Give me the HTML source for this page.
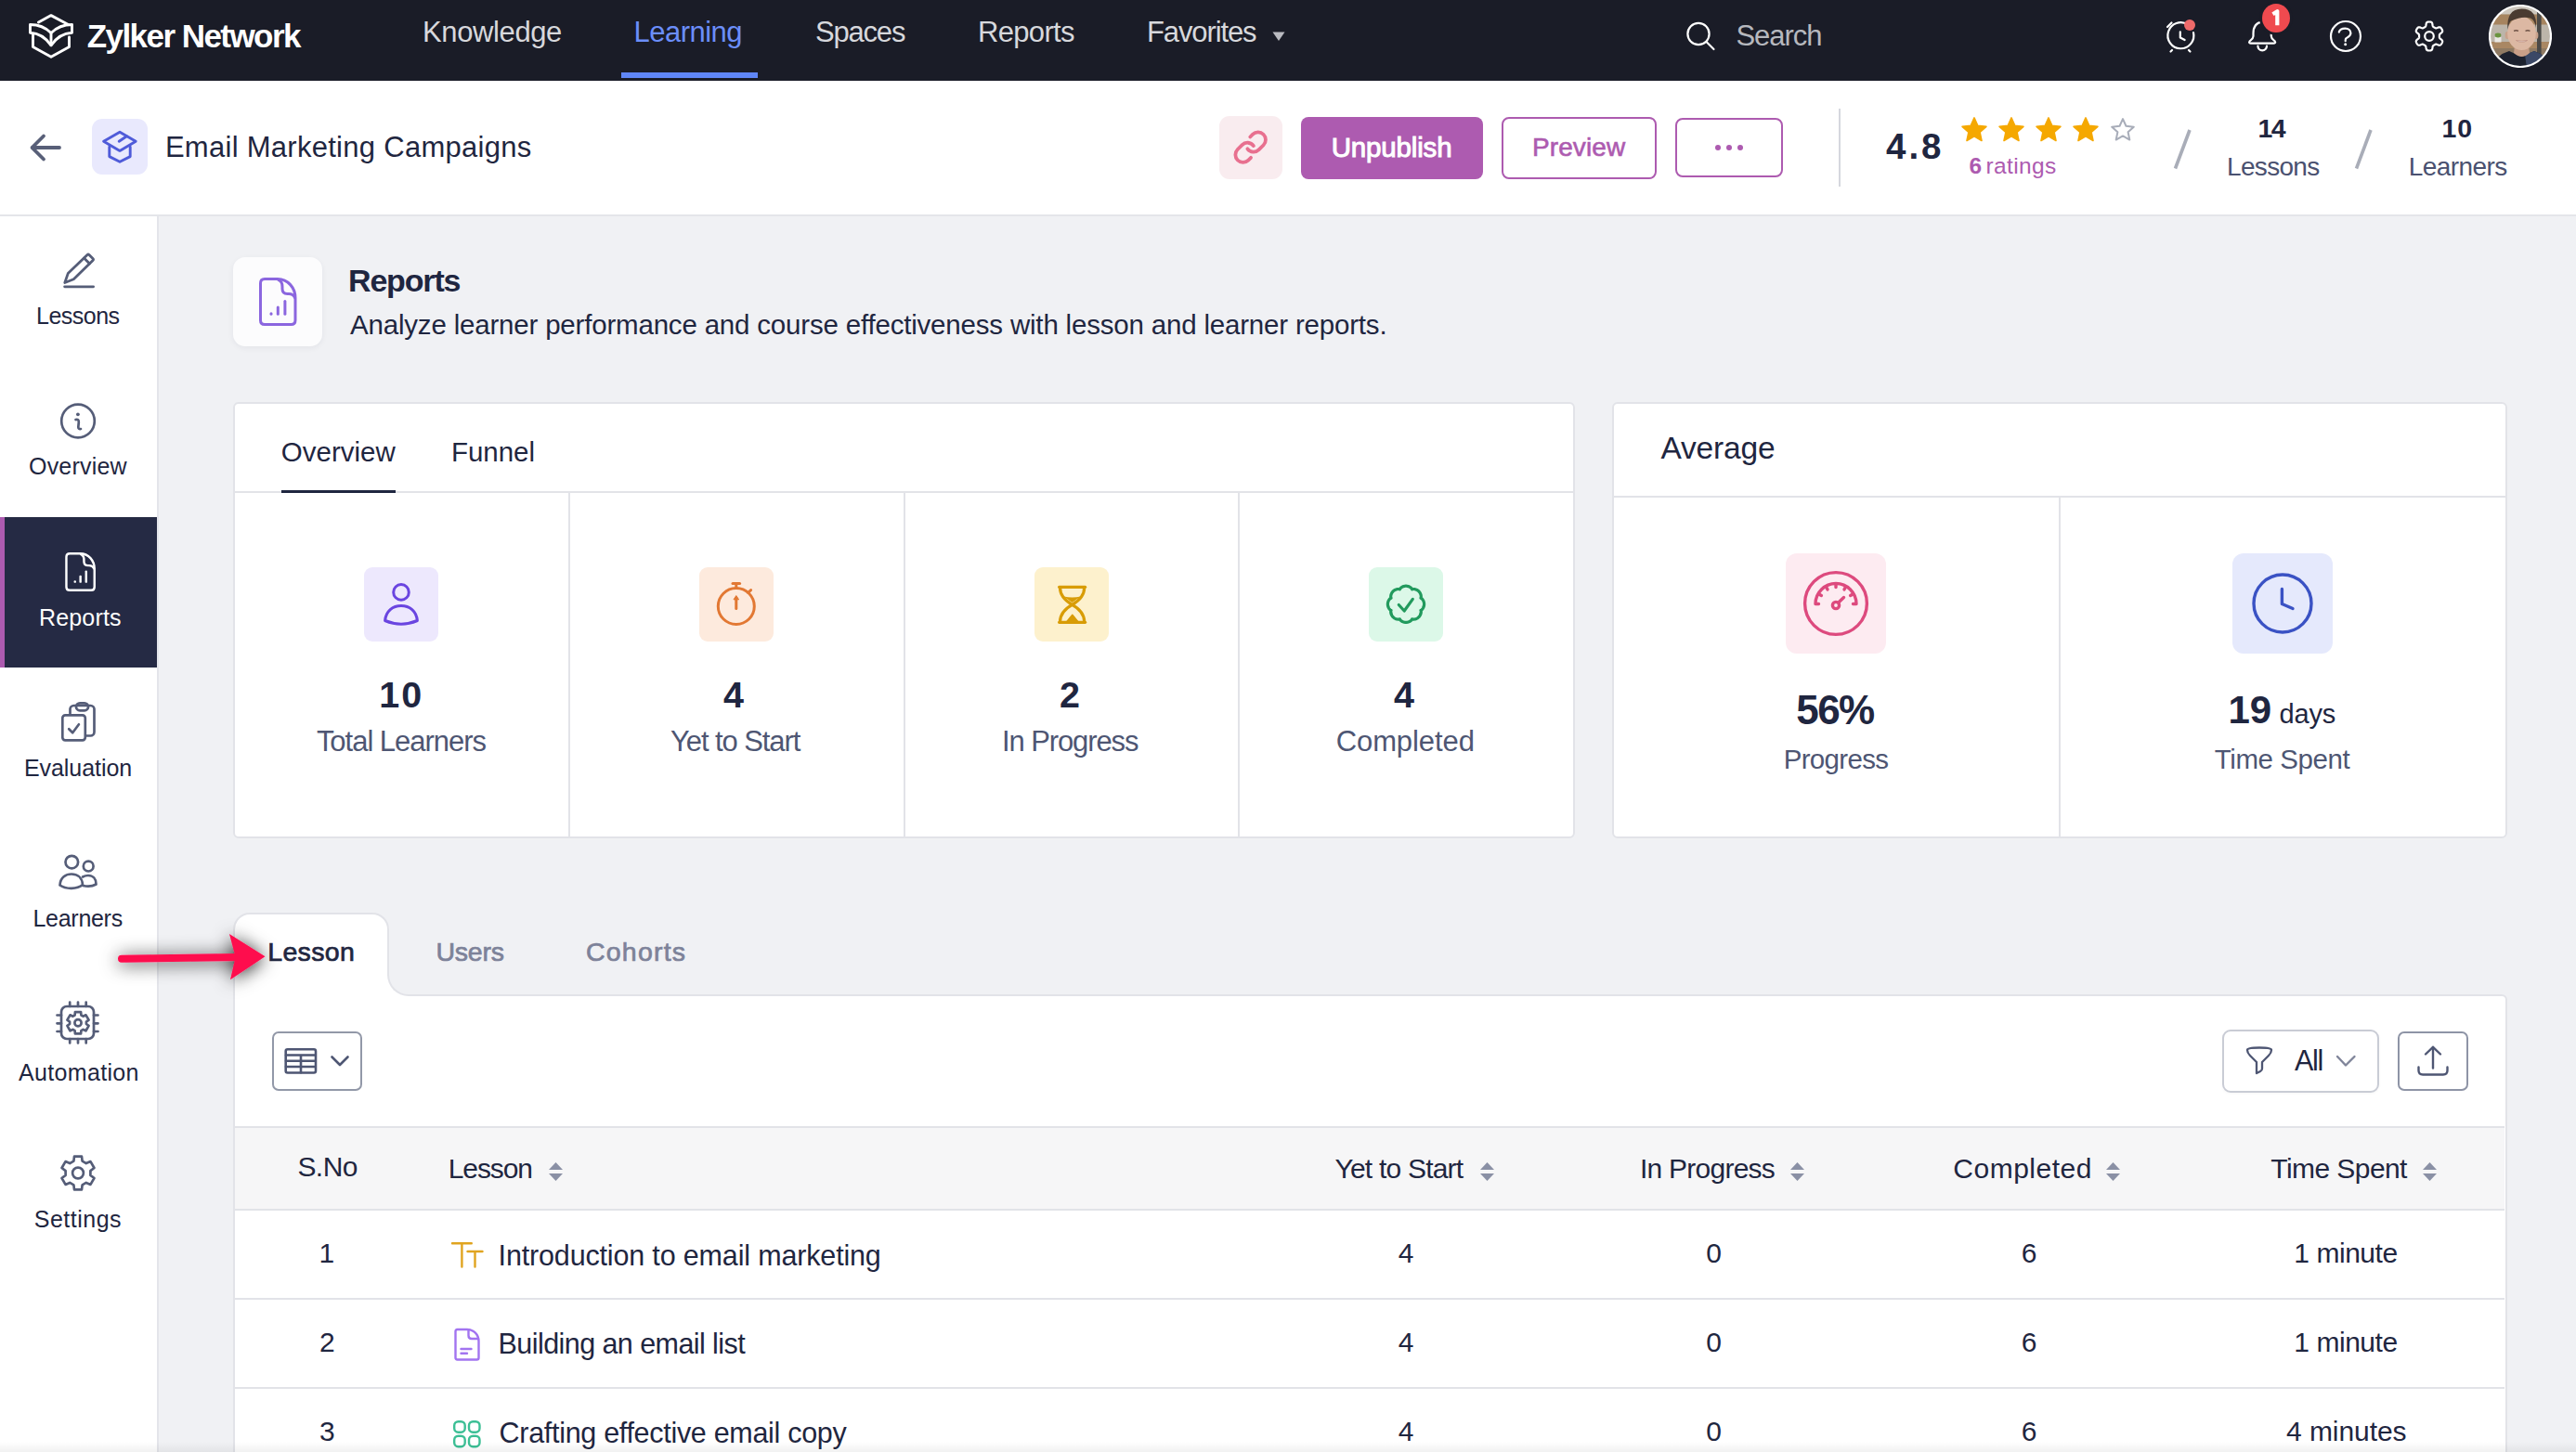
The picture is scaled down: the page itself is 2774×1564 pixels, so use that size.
<!DOCTYPE html><html><head><meta charset="utf-8"><style>
html,body{margin:0;padding:0;}
body{width:2774px;height:1564px;position:relative;overflow:hidden;background:#f0f1f4;font-family:"Liberation Sans",sans-serif;}
.t{position:absolute;white-space:nowrap;}
svg{display:block;}
</style></head><body>
<div style="position:absolute;left:0px;top:0px;width:2774px;height:87px;background:#1a1c27"></div>
<div style="position:absolute;left:669px;top:78px;width:147px;height:6px;background:#5f86f7"></div>
<svg style="position:absolute;left:31px;top:15px;" width="48" height="48" viewBox="0 0 48 48" fill="none"><g stroke="#fff" stroke-width="2.9" stroke-linejoin="round" stroke-linecap="round">
<path d="M10.5 9 L24 1.6 L42.5 11.5"/>
<path d="M1.5 11.5 Q15 11.5 24 20.5 Q33 11.5 46.5 11.5 V20.3 Q33 21 24 33.8 Q15 21 1.5 20.3 Z"/>
<path d="M24 20.5 V33.8"/>
<path d="M4.5 21.5 V35.5 L24 46.2 L43.5 35.5 V25"/>
</g></svg>
<div class="t" style="left:93.7px;top:20.8px;font-size:35.0px;line-height:35.0px;font-weight:700;letter-spacing:-1.55px;color:#ffffff;">Zylker Network</div>
<div class="t" style="left:455px;top:18.9px;font-size:31.0px;line-height:31.0px;font-weight:400;letter-spacing:-0.38px;color:#d7d8dc;">Knowledge</div>
<div class="t" style="left:878px;top:18.9px;font-size:31.0px;line-height:31.0px;font-weight:400;letter-spacing:-1.2px;color:#d7d8dc;">Spaces</div>
<div class="t" style="left:1053px;top:18.9px;font-size:31.0px;line-height:31.0px;font-weight:400;letter-spacing:-0.67px;color:#d7d8dc;">Reports</div>
<div class="t" style="left:1235px;top:18.9px;font-size:31.0px;line-height:31.0px;font-weight:400;letter-spacing:-1.12px;color:#d7d8dc;">Favorites</div>
<div class="t" style="left:682.4px;top:18.9px;font-size:31.0px;line-height:31.0px;font-weight:400;letter-spacing:-0.49px;color:#6b8efa;">Learning</div>
<svg style="position:absolute;left:1368px;top:32px;" width="18" height="14" viewBox="0 0 18 14" fill="none"><path d="M2.5 2.5 H15.5 L9 12 Z" fill="#b9bac0"/></svg>
<svg style="position:absolute;left:1810px;top:18px;" width="40" height="40" viewBox="0 0 40 40" fill="none"><g stroke="#fff" stroke-width="2.2" stroke-linecap="round"><circle cx="19" cy="18.5" r="11.6"/><path d="M27.5 27 L35.5 35"/></g></svg>
<div class="t" style="left:1869.4px;top:23.1px;font-size:31.0px;line-height:31.0px;font-weight:400;letter-spacing:-1.04px;color:#b6b8be;">Search</div>
<svg style="position:absolute;left:2326px;top:16px;" width="44" height="44" viewBox="0 0 44 44" fill="none"><g stroke="#fff" stroke-width="2.2" stroke-linecap="round" stroke-linejoin="round">
<path d="M30 10.5 A14 14 0 1 0 36 19"/>
<path d="M21.8 18.3 V24.6 L26.6 27"/>
<path d="M8 13 L12.5 8.5"/>
<path d="M13 38 L11.5 39.5"/><path d="M31 38 L32.5 39.5"/>
</g><circle cx="32" cy="11" r="6" fill="#ef6a6a"/></svg>
<svg style="position:absolute;left:2414px;top:17px;" width="44" height="44" viewBox="0 0 44 44" fill="none"><g stroke="#fff" stroke-width="2.2" stroke-linecap="round" stroke-linejoin="round" fill="none"><path d="M22 6.6 C15 7.5 12.5 13 12.5 19 L12.5 22 C12.5 24.5 10 26 8.5 27.5 C7.5 29 8.5 29.6 10 29.6 H34.3 C35.8 29.6 36.8 29 35.8 27.5 C34.3 26 31.8 24.5 31.8 22 L31.8 19 C31.8 13 29.5 7.5 22 6.6 Z"/><path d="M17.4 32.6 A4.8 4.8 0 0 0 27 32.6"/></g></svg>
<div style="position:absolute;left:2435.5px;top:3.5px;width:30px;height:31px;background:#ef4a4f;border-radius:50%;box-shadow:0 0 0 3px #1a1c27"></div>
<svg style="position:absolute;left:2435.5px;top:3.5px;" width="30" height="31" viewBox="0 0 30 31" fill="none"><path d="M11.5 11.3 L16.3 8.2 V23.3" stroke="#fff" stroke-width="4.2" stroke-linecap="butt" stroke-linejoin="round" fill="none"/></svg>
<svg style="position:absolute;left:2506px;top:19px;" width="40" height="40" viewBox="0 0 40 40" fill="none"><g stroke="#fff" stroke-width="2.2" stroke-linecap="round" fill="none">
<circle cx="20" cy="20" r="16"/>
<path d="M12.8 15.6 C13.5 12.8 16.5 11.6 19.5 11.6 C23 11.6 25.4 13.8 25.4 16.8 C25.4 19.8 22.5 21 20.8 22 C19.9 22.5 19.7 23.3 19.7 24.5 V25.2"/>
</g><circle cx="19.7" cy="28.7" r="1.5" fill="#fff"/></svg>
<svg style="position:absolute;left:2596px;top:19px;" width="40" height="40" viewBox="0 0 40 40" fill="none"><g stroke="#fff" stroke-width="2.2" stroke-linejoin="round"><path d="M30.90 20.00 L30.90 20.29 L30.90 20.57 L30.90 20.86 L30.91 21.15 L30.95 21.44 L31.04 21.75 L31.22 22.08 L31.55 22.45 L32.08 22.90 L32.75 23.42 L33.40 23.97 L33.88 24.51 L34.13 25.01 L34.22 25.46 L34.19 25.88 L34.09 26.27 L33.96 26.66 L33.80 27.03 L33.62 27.39 L33.42 27.75 L33.21 28.10 L32.99 28.43 L32.75 28.76 L32.48 29.07 L32.18 29.35 L31.83 29.58 L31.40 29.74 L30.85 29.77 L30.14 29.62 L29.33 29.33 L28.55 29.01 L27.90 28.77 L27.41 28.67 L27.03 28.68 L26.72 28.76 L26.45 28.88 L26.19 29.01 L25.94 29.15 L25.70 29.30 L25.45 29.44 L25.20 29.58 L24.95 29.72 L24.71 29.87 L24.46 30.02 L24.23 30.20 L24.00 30.43 L23.81 30.75 L23.65 31.23 L23.53 31.91 L23.42 32.75 L23.26 33.59 L23.03 34.28 L22.73 34.74 L22.38 35.04 L22.00 35.22 L21.61 35.34 L21.21 35.42 L20.81 35.47 L20.41 35.49 L20.00 35.50 L19.59 35.49 L19.19 35.47 L18.79 35.42 L18.39 35.34 L18.00 35.22 L17.62 35.04 L17.27 34.74 L16.97 34.28 L16.74 33.59 L16.58 32.75 L16.47 31.91 L16.35 31.23 L16.19 30.75 L16.00 30.43 L15.77 30.20 L15.54 30.02 L15.29 29.87 L15.05 29.72 L14.80 29.58 L14.55 29.44 L14.30 29.30 L14.06 29.15 L13.81 29.01 L13.55 28.88 L13.28 28.76 L12.97 28.68 L12.59 28.67 L12.10 28.77 L11.45 29.01 L10.67 29.33 L9.86 29.62 L9.15 29.77 L8.60 29.74 L8.17 29.58 L7.82 29.35 L7.52 29.07 L7.25 28.76 L7.01 28.43 L6.79 28.10 L6.58 27.75 L6.38 27.39 L6.20 27.03 L6.04 26.66 L5.91 26.27 L5.81 25.88 L5.78 25.46 L5.87 25.01 L6.12 24.51 L6.60 23.97 L7.25 23.42 L7.92 22.90 L8.45 22.45 L8.78 22.08 L8.96 21.75 L9.05 21.44 L9.09 21.15 L9.10 20.86 L9.10 20.57 L9.10 20.29 L9.10 20.00 L9.10 19.71 L9.10 19.43 L9.10 19.14 L9.09 18.85 L9.05 18.56 L8.96 18.25 L8.78 17.92 L8.45 17.55 L7.92 17.10 L7.25 16.58 L6.60 16.03 L6.12 15.49 L5.87 14.99 L5.78 14.54 L5.81 14.12 L5.91 13.73 L6.04 13.34 L6.20 12.97 L6.38 12.61 L6.58 12.25 L6.79 11.90 L7.01 11.57 L7.25 11.24 L7.52 10.93 L7.82 10.65 L8.17 10.42 L8.60 10.26 L9.15 10.23 L9.86 10.38 L10.67 10.67 L11.45 10.99 L12.10 11.23 L12.59 11.33 L12.97 11.32 L13.28 11.24 L13.55 11.12 L13.81 10.99 L14.06 10.85 L14.30 10.70 L14.55 10.56 L14.80 10.42 L15.05 10.28 L15.29 10.13 L15.54 9.98 L15.77 9.80 L16.00 9.57 L16.19 9.25 L16.35 8.77 L16.47 8.09 L16.58 7.25 L16.74 6.41 L16.97 5.72 L17.27 5.26 L17.62 4.96 L18.00 4.78 L18.39 4.66 L18.79 4.58 L19.19 4.53 L19.59 4.51 L20.00 4.50 L20.41 4.51 L20.81 4.53 L21.21 4.58 L21.61 4.66 L22.00 4.78 L22.38 4.96 L22.73 5.26 L23.03 5.72 L23.26 6.41 L23.42 7.25 L23.53 8.09 L23.65 8.77 L23.81 9.25 L24.00 9.57 L24.23 9.80 L24.46 9.98 L24.71 10.13 L24.95 10.28 L25.20 10.42 L25.45 10.56 L25.70 10.70 L25.94 10.85 L26.19 10.99 L26.45 11.12 L26.72 11.24 L27.03 11.32 L27.41 11.33 L27.90 11.23 L28.55 10.99 L29.33 10.67 L30.14 10.38 L30.85 10.23 L31.40 10.26 L31.83 10.42 L32.18 10.65 L32.48 10.93 L32.75 11.24 L32.99 11.57 L33.21 11.90 L33.42 12.25 L33.62 12.61 L33.80 12.97 L33.96 13.34 L34.09 13.73 L34.19 14.12 L34.22 14.54 L34.13 14.99 L33.88 15.49 L33.40 16.03 L32.75 16.58 L32.08 17.10 L31.55 17.55 L31.22 17.92 L31.04 18.25 L30.95 18.56 L30.91 18.85 L30.90 19.14 L30.90 19.43 L30.90 19.71 Z"/><circle cx="20" cy="20" r="4.8"/></g></svg>
<svg style="position:absolute;left:2680px;top:5px;" width="68" height="68" viewBox="0 0 68 68" fill="none"><defs><clipPath id="avc"><circle cx="34" cy="34" r="33"/></clipPath></defs>
<g clip-path="url(#avc)">
<rect width="68" height="68" fill="#bcb5aa"/>
<rect y="0" width="68" height="10.5" fill="#cdc7be"/>
<rect y="10.5" width="68" height="11" fill="#a6845f"/>
<rect y="40" width="68" height="7" fill="#a98763"/>
<rect y="47" width="68" height="21" fill="#8f7a63"/>
<rect x="52" y="8" width="4.6" height="60" fill="#4a4947"/>
<rect x="6.5" y="35" width="7" height="5.5" fill="#e9e7e3"/>
<ellipse cx="10" cy="33" rx="3.4" ry="2.4" fill="#6a9440"/>
<path d="M3 68 Q8 54 22 50 L35.5 56 L49 50 Q62 54 66 68 Z" fill="#1c212e"/>
<path d="M39 54 L49 50 Q62 54 66 68 H41 Z" fill="#3b4866"/>
<path d="M28 44 L27 52 Q35.5 60 44 52 L43 44 Z" fill="#c99f88"/>
<ellipse cx="19.8" cy="33" rx="2.2" ry="4" fill="#c9a28c"/>
<ellipse cx="51.2" cy="33" rx="2.2" ry="4" fill="#c9a28c"/>
<ellipse cx="35.5" cy="31" rx="15.3" ry="18" fill="#dcb8a3"/>
<path d="M20.5 27 Q18.5 5 35.5 4.6 Q52.5 4.6 51 25 Q50 17 45 14.5 Q36 12 24 17.5 Q21.5 20 20.5 27 Z" fill="#4a3b31"/>
<path d="M27 28.3 Q29.5 27.2 32 28.3 M39.5 28.3 Q42 27.2 44.5 28.3" stroke="#6e5246" stroke-width="1.3" fill="none"/>
<path d="M29.5 38.5 Q35.5 42 41.5 38.5 Q35.5 40 29.5 38.5 Z" fill="#f4efe8" stroke="#b8857a" stroke-width="0.6"/>
</g>
<circle cx="34" cy="34" r="33" stroke="#fff" stroke-width="2.2" fill="none"/></svg>
<div style="position:absolute;left:0px;top:87px;width:2774px;height:144px;background:#fff"></div>
<div style="position:absolute;left:0px;top:231px;width:2774px;height:2px;background:#e4e5ea"></div>
<svg style="position:absolute;left:28px;top:140px;" width="42" height="38" viewBox="0 0 42 38" fill="none"><g stroke="#585f78" stroke-width="3.8" stroke-linecap="round" stroke-linejoin="round" fill="none"><path d="M36 19 H7"/><path d="M19 6.5 L6.5 19 L19 31.5"/></g></svg>
<div style="position:absolute;left:99px;top:128px;width:60px;height:60px;background:#e9e9fd;border-radius:11px"></div>
<svg style="position:absolute;left:99px;top:128px;" width="60" height="60" viewBox="0 0 60 60" fill="none"><g stroke="#4f5bd9" stroke-width="2.9" stroke-linejoin="round" stroke-linecap="round" fill="none">
<path d="M12.6 24.3 L30 14.3 L47.2 24.3 L30 34.4 Z"/>
<path d="M18.8 30.2 V40.6 L30 46.3 L41.2 40.6 V30.2"/>
<path d="M29.2 24.3 L37.4 18.8"/>
</g></svg>
<div class="t" style="left:177.9px;top:143.3px;font-size:31.0px;line-height:31.0px;font-weight:400;letter-spacing:0.28px;color:#1f2640;">Email Marketing Campaigns</div>
<div style="position:absolute;left:1313px;top:125px;width:68px;height:68px;background:#f9ecef;border-radius:11px"></div>
<svg style="position:absolute;left:1327.4px;top:139.4px;" width="39.3" height="39.3" viewBox="0 0 24 24" fill="none"><g stroke="#e8708f" stroke-width="2.3" stroke-linecap="round" stroke-linejoin="round" fill="none"><path d="M10 13a5 5 0 0 0 7.54.54l3-3a5 5 0 0 0-7.07-7.07l-1.72 1.71"/><path d="M14 11a5 5 0 0 0-7.54-.54l-3 3a5 5 0 0 0 7.07 7.07l1.71-1.71"/></g></svg>
<div style="position:absolute;left:1401px;top:126px;width:196px;height:67px;background:#ad5bb0;border-radius:8px"></div>
<div class="t" style="left:1433.7px;top:144.1px;font-size:29.5px;line-height:29.5px;font-weight:400;letter-spacing:-0.16px;color:#ffffff;-webkit-text-stroke:1px #fff">Unpublish</div>
<div style="position:absolute;left:1617px;top:126px;width:167px;height:67px;border:2px solid #ad5bb0;border-radius:8px;box-sizing:border-box"></div>
<div class="t" style="left:1650px;top:145.2px;font-size:28.0px;line-height:28.0px;font-weight:400;letter-spacing:0.1px;color:#ad5bb0;-webkit-text-stroke:0.6px #ad5bb0">Preview</div>
<div style="position:absolute;left:1804px;top:127px;width:116px;height:64px;border:2px solid #ad5bb0;border-radius:8px;box-sizing:border-box"></div>
<div style="position:absolute;left:1846.8px;top:155.8px;width:6.4px;height:6.4px;background:#ad5bb0;border-radius:50%"></div>
<div style="position:absolute;left:1858.8px;top:155.8px;width:6.4px;height:6.4px;background:#ad5bb0;border-radius:50%"></div>
<div style="position:absolute;left:1870.8px;top:155.8px;width:6.4px;height:6.4px;background:#ad5bb0;border-radius:50%"></div>
<div style="position:absolute;left:1980px;top:117px;width:2px;height:84px;background:#d5d7de"></div>
<div class="t" style="left:2031px;top:139.3px;font-size:38.5px;line-height:38.5px;font-weight:700;letter-spacing:3.0px;color:#1f2640;">4.8</div>
<svg style="position:absolute;left:2100px;top:120px;" width="200" height="40" viewBox="0 0 200 40" fill="none"><path d="M26.00 6.90 L29.76 15.32 L38.93 16.30 L32.09 22.48 L33.99 31.50 L26.00 26.90 L18.01 31.50 L19.91 22.48 L13.07 16.30 L22.24 15.32 Z" fill="#f5a800" stroke="#f5a800" stroke-width="1.6" stroke-linejoin="round"/><path d="M66.00 6.90 L69.76 15.32 L78.93 16.30 L72.09 22.48 L73.99 31.50 L66.00 26.90 L58.01 31.50 L59.91 22.48 L53.07 16.30 L62.24 15.32 Z" fill="#f5a800" stroke="#f5a800" stroke-width="1.6" stroke-linejoin="round"/><path d="M106.00 6.90 L109.76 15.32 L118.93 16.30 L112.09 22.48 L113.99 31.50 L106.00 26.90 L98.01 31.50 L99.91 22.48 L93.07 16.30 L102.24 15.32 Z" fill="#f5a800" stroke="#f5a800" stroke-width="1.6" stroke-linejoin="round"/><path d="M146.00 6.90 L149.76 15.32 L158.93 16.30 L152.09 22.48 L153.99 31.50 L146.00 26.90 L138.01 31.50 L139.91 22.48 L133.07 16.30 L142.24 15.32 Z" fill="#f5a800" stroke="#f5a800" stroke-width="1.6" stroke-linejoin="round"/><path d="M186.00 8.10 L189.47 15.73 L197.79 16.67 L191.61 22.32 L193.29 30.53 L186.00 26.40 L178.71 30.53 L180.39 22.32 L174.21 16.67 L182.53 15.73 Z" fill="none" stroke="#a8adb9" stroke-width="2" stroke-linejoin="round"/></svg>
<div class="t" style="left:2120.5px;top:166.8px;font-size:24.5px;line-height:24.5px;font-weight:700;letter-spacing:0px;color:#ad5bb0;">6</div>
<div class="t" style="left:2138.5px;top:166.8px;font-size:24.5px;line-height:24.5px;font-weight:400;letter-spacing:0.35px;color:#ad5bb0;">ratings</div>
<svg style="position:absolute;left:2330px;top:130px;" width="40" height="60" viewBox="0 0 40 60" fill="none"><path d="M28 10 L12.5 51.5" stroke="#a9adb8" stroke-width="3.6"/></svg>
<svg style="position:absolute;left:2525px;top:130px;" width="40" height="60" viewBox="0 0 40 60" fill="none"><path d="M28 10 L12.5 51.5" stroke="#a9adb8" stroke-width="3.6"/></svg>
<div class="t" style="left:2431.5px;top:124.0px;font-size:28.5px;line-height:28.5px;font-weight:700;letter-spacing:-1.5px;color:#1f2640;">14</div>
<div class="t" style="left:2398px;top:166.0px;font-size:28.0px;line-height:28.0px;font-weight:400;letter-spacing:-0.67px;color:#4a5170;">Lessons</div>
<div class="t" style="left:2629.6px;top:124.0px;font-size:28.5px;line-height:28.5px;font-weight:700;letter-spacing:0.8px;color:#1f2640;">10</div>
<div class="t" style="left:2593.7px;top:166.0px;font-size:28.0px;line-height:28.0px;font-weight:400;letter-spacing:-0.57px;color:#4a5170;">Learners</div>
<div style="position:absolute;left:0px;top:233px;width:169px;height:1331px;background:#fff"></div>
<div style="position:absolute;left:169px;top:233px;width:2px;height:1331px;background:#e4e5ea"></div>
<div style="position:absolute;left:0px;top:557px;width:169px;height:162px;background:#252a44"></div>
<div style="position:absolute;left:0px;top:557px;width:5px;height:162px;background:#ad5bb0"></div>
<svg style="position:absolute;left:60px;top:265px;" width="50" height="52" viewBox="0 0 50 52" fill="none"><g stroke="#555d78" stroke-width="2.8" stroke-linecap="round" stroke-linejoin="round" fill="none">
<path d="M9.8 39.5 L13.2 29.6 L34 9.5 Q35 8.5 36 9.5 L40 13.5 Q41 14.5 40 15.5 L19.3 35.8 Z"/>
<path d="M30.5 13 L36.5 19"/>
<path d="M9.6 43.8 H40.6"/>
</g></svg>
<svg style="position:absolute;left:60px;top:430px;" width="48" height="48" viewBox="0 0 48 48" fill="none"><g stroke="#555d78" stroke-width="2.7" stroke-linecap="round" fill="none"><circle cx="24" cy="23.5" r="17.8"/>
<path d="M21.5 22 Q25 21 24.8 25 L24.3 30 Q24.4 32.5 27 32"/></g><circle cx="23.9" cy="16.3" r="1.9" fill="#555d78"/></svg>
<svg style="position:absolute;left:70px;top:594.8px;" width="33.6" height="42" viewBox="0 0 41 52" fill="none"><g stroke="#ffffff" stroke-width="3" stroke-linecap="round" stroke-linejoin="round" fill="none">
<path d="M1.5 6 Q1.5 1.5 6 1.5 H20 C31 1.5 39 11 39 22 V46 Q39 50.5 34.5 50.5 H6 Q1.5 50.5 1.5 46 Z"/>
<path d="M21 2.5 Q25 4 25 10 V12 Q25 17.5 30.5 17.5 H32 Q36.5 17.5 38.5 21.5"/>
<path d="M13 38.8 V39.2"/><path d="M20.3 32 V39.2"/><path d="M27.9 25.5 V39.2"/>
</g></svg>
<svg style="position:absolute;left:60px;top:750px;" width="50" height="54" viewBox="0 0 50 54" fill="none"><g stroke="#555d78" stroke-width="2.7" stroke-linecap="round" stroke-linejoin="round" fill="none">
<path d="M15.5 18.5 V14 a4 4 0 0 1 4 -4 H37.5 a4 4 0 0 1 4 4 V38.5 a4 4 0 0 1 -4 4 H32.8"/>
<rect x="22" y="7.3" width="13" height="8" rx="4"/>
<rect x="7.3" y="20.3" width="24.5" height="27" rx="3"/>
<path d="M14.2 35.2 L18.2 39.2 L24.9 30.3"/>
</g></svg>
<svg style="position:absolute;left:60px;top:912px;" width="50" height="52" viewBox="0 0 50 52" fill="none"><g stroke="#555d78" stroke-width="2.7" stroke-linecap="round" stroke-linejoin="round" fill="none">
<circle cx="17.3" cy="16.6" r="6.8"/><circle cx="35.2" cy="21.1" r="5.4"/>
<path d="M4.5 41.5 C5 33 11 29.5 17 29.5 C23 29.5 28.5 33 29 41 C23 46 11 46 4.5 41.5 Z"/>
<path d="M29 32.5 C31 31.5 33 31 35 31 C40 31 43.5 34.5 43.5 40.5 C40 42.5 34 43 29.5 42"/>
</g></svg>
<svg style="position:absolute;left:59px;top:1077px;" width="50" height="50" viewBox="0 0 50 50" fill="none"><g stroke="#555d78" stroke-width="2.7" stroke-linecap="round" stroke-linejoin="round" fill="none">
<rect x="7" y="7" width="35" height="35" rx="6"/>
<path d="M16.2 2.5 V7 M25 2.5 V7 M33.7 2.5 V7 M16.2 42 V46.5 M25 42 V46.5 M33.7 42 V46.5 M2.5 16.5 H7 M2.5 25.3 H7 M2.5 34 H7 M42 16.5 H46.5 M42 25.3 H46.5 M42 34 H46.5"/>
<path d="M21.60 16.47 L21.89 13.21 L28.11 13.21 L28.40 16.47 L30.52 17.69 L33.49 16.31 L36.59 21.69 L33.92 23.58 L33.92 26.02 L36.59 27.91 L33.49 33.29 L30.52 31.91 L28.40 33.13 L28.11 36.39 L21.89 36.39 L21.60 33.13 L19.48 31.91 L16.51 33.29 L13.41 27.91 L16.08 26.02 L16.08 23.58 L13.41 21.69 L16.51 16.31 L19.48 17.69 Z"/><circle cx="25" cy="24.8" r="3.6"/>
</g></svg>
<svg style="position:absolute;left:60px;top:1240px;" width="48" height="48" viewBox="0 0 48 48" fill="none"><g stroke="#555d78" stroke-width="2.7" stroke-linejoin="round" fill="none"><path d="M19.39 10.70 L20.01 5.64 L27.99 5.64 L28.61 10.70 L32.78 13.11 L37.47 11.11 L41.46 18.03 L37.39 21.09 L37.39 25.91 L41.46 28.97 L37.47 35.89 L32.78 33.89 L28.61 36.30 L27.99 41.36 L20.01 41.36 L19.39 36.30 L15.22 33.89 L10.53 35.89 L6.54 28.97 L10.61 25.91 L10.61 21.09 L6.54 18.03 L10.53 11.11 L15.22 13.11 Z"/><circle cx="24" cy="23.5" r="5.9"/></g></svg>
<div class="t" style="left:39px;top:328.4px;font-size:25.0px;line-height:25.0px;font-weight:400;letter-spacing:-0.5px;color:#1f2640;">Lessons</div>
<div class="t" style="left:31px;top:490.4px;font-size:25.0px;line-height:25.0px;font-weight:400;letter-spacing:0.2px;color:#1f2640;">Overview</div>
<div class="t" style="left:26px;top:814.8px;font-size:25.0px;line-height:25.0px;font-weight:400;letter-spacing:-0.07px;color:#1f2640;">Evaluation</div>
<div class="t" style="left:35.5px;top:976.8px;font-size:25.0px;line-height:25.0px;font-weight:400;letter-spacing:-0.29px;color:#1f2640;">Learners</div>
<div class="t" style="left:20px;top:1142.8px;font-size:25.0px;line-height:25.0px;font-weight:400;letter-spacing:0.33px;color:#1f2640;">Automation</div>
<div class="t" style="left:36.8px;top:1300.8px;font-size:25.0px;line-height:25.0px;font-weight:400;letter-spacing:0.49px;color:#1f2640;">Settings</div>
<div class="t" style="left:42px;top:652.8px;font-size:25.0px;line-height:25.0px;font-weight:400;letter-spacing:0.17px;color:#ffffff;">Reports</div>
<div style="position:absolute;left:251px;top:277px;width:96px;height:96px;background:#fcfcfd;border-radius:13px;box-shadow:0 2px 6px rgba(30,35,60,0.06)"></div>
<svg style="position:absolute;left:278.6px;top:299px;" width="41" height="52" viewBox="0 0 41 52" fill="none"><g stroke="#8b66df" stroke-width="3" stroke-linecap="round" stroke-linejoin="round" fill="none">
<path d="M1.5 6 Q1.5 1.5 6 1.5 H20 C31 1.5 39 11 39 22 V46 Q39 50.5 34.5 50.5 H6 Q1.5 50.5 1.5 46 Z"/>
<path d="M21 2.5 Q25 4 25 10 V12 Q25 17.5 30.5 17.5 H32 Q36.5 17.5 38.5 21.5"/>
<path d="M13 38.8 V39.2"/><path d="M20.3 32 V39.2"/><path d="M27.9 25.5 V39.2"/>
</g></svg>
<div class="t" style="left:375px;top:285.3px;font-size:34.0px;line-height:34.0px;font-weight:700;letter-spacing:-1.17px;color:#1f2640;">Reports</div>
<div class="t" style="left:377px;top:334.6px;font-size:29.5px;line-height:29.5px;font-weight:400;letter-spacing:-0.19px;color:#1f2640;">Analyze learner performance and course effectiveness with lesson and learner reports.</div>
<div style="position:absolute;left:251px;top:433px;width:1445px;height:470px;background:#fff;border:2px solid #e2e3e8;border-radius:6px;box-sizing:border-box"></div>
<div style="position:absolute;left:253px;top:529px;width:1441px;height:2px;background:#e2e3e8"></div>
<div style="position:absolute;left:303px;top:528px;width:123px;height:3px;background:#1f2640"></div>
<div class="t" style="left:302.7px;top:471.8px;font-size:29.5px;line-height:29.5px;font-weight:400;letter-spacing:0.03px;color:#1f2640;">Overview</div>
<div class="t" style="left:486px;top:471.8px;font-size:29.5px;line-height:29.5px;font-weight:400;letter-spacing:-0.04px;color:#1f2640;">Funnel</div>
<div style="position:absolute;left:612px;top:531px;width:2px;height:370px;background:#e2e3e8"></div>
<div style="position:absolute;left:973px;top:531px;width:2px;height:370px;background:#e2e3e8"></div>
<div style="position:absolute;left:1333px;top:531px;width:2px;height:370px;background:#e2e3e8"></div>
<div style="position:absolute;left:392px;top:611px;width:80px;height:80px;background:#ede8fd;border-radius:9px"></div>
<div style="position:absolute;left:753px;top:611px;width:80px;height:80px;background:#fdeadd;border-radius:9px"></div>
<div style="position:absolute;left:1114px;top:611px;width:80px;height:80px;background:#fdf1cd;border-radius:9px"></div>
<div style="position:absolute;left:1474px;top:611px;width:80px;height:80px;background:#dcf8e8;border-radius:9px"></div>
<svg style="position:absolute;left:392px;top:611px;" width="80" height="80" viewBox="0 0 80 80" fill="none"><g stroke="#6a45e0" stroke-width="3" stroke-linejoin="round" fill="none">
<circle cx="40" cy="26.9" r="8.3"/>
<path d="M22.6 57.5 C23.5 47 31 41.4 40 41.4 C49 41.4 56.5 47 57.4 57.5 C46 62.3 34 62.3 22.6 57.5 Z"/></g></svg>
<svg style="position:absolute;left:753px;top:611px;" width="80" height="80" viewBox="0 0 80 80" fill="none"><g stroke="#e27833" stroke-width="3" stroke-linecap="round" stroke-linejoin="round" fill="none">
<circle cx="39.8" cy="42" r="19.5"/>
<path d="M39.8 19 V22.5"/><path d="M36 17.6 H43.6"/><path d="M52.6 27.3 L55.6 24.6"/>
<path d="M39.8 44.6 V33"/></g><path d="M37 34.8 L39.8 30.6 L42.6 34.8 Z" fill="#e27833" stroke="#e27833" stroke-width="1" stroke-linejoin="round"/></svg>
<svg style="position:absolute;left:1114px;top:611px;" width="80" height="80" viewBox="0 0 80 80" fill="none"><g stroke="#d89c06" stroke-width="3.2" stroke-linecap="round" stroke-linejoin="round" fill="none">
<path d="M26.6 21.3 H54.6"/><path d="M26.6 59.3 H54.6"/>
<path d="M27.5 21.8 Q27.5 33 40.6 40.3 Q53.7 33 53.7 21.8"/>
<path d="M27.5 58.8 Q27.5 47.6 40.6 40.3 Q53.7 47.6 53.7 58.8"/></g>
<path d="M31.5 31.6 Q40.6 33.4 49.7 31.6 L40.6 38 Z" fill="#d89c06"/>
<path d="M34.6 58.6 L40.8 51.3 L47 58.6 Z" fill="#d89c06" stroke="#d89c06" stroke-width="1.4" stroke-linejoin="round"/></svg>
<svg style="position:absolute;left:1474px;top:611px;" width="80" height="80" viewBox="0 0 80 80" fill="none"><g stroke="#229a5d" stroke-width="3.2" stroke-linecap="round" stroke-linejoin="round" fill="none">
<path d="M59.60 39.80 L59.58 40.44 L59.50 41.08 L59.38 41.71 L59.21 42.33 L59.00 42.94 L58.74 43.53 L58.43 44.10 L58.08 44.64 L57.68 45.16 L57.23 45.65 L56.71 46.09 L55.98 46.42 L56.26 47.17 L56.32 47.85 L56.29 48.51 L56.21 49.16 L56.07 49.79 L55.88 50.41 L55.65 51.02 L55.37 51.60 L55.06 52.16 L54.69 52.69 L54.30 53.19 L53.86 53.66 L53.39 54.10 L52.89 54.49 L52.36 54.86 L51.80 55.17 L51.22 55.45 L50.61 55.68 L49.99 55.87 L49.36 56.01 L48.71 56.09 L48.05 56.12 L47.37 56.06 L46.62 55.78 L46.29 56.51 L45.85 57.03 L45.36 57.48 L44.84 57.88 L44.30 58.23 L43.73 58.54 L43.14 58.80 L42.53 59.01 L41.91 59.18 L41.28 59.30 L40.64 59.38 L40.00 59.40 L39.36 59.38 L38.72 59.30 L38.09 59.18 L37.47 59.01 L36.86 58.80 L36.27 58.54 L35.70 58.23 L35.16 57.88 L34.64 57.48 L34.15 57.03 L33.71 56.51 L33.38 55.78 L32.63 56.06 L31.95 56.12 L31.29 56.09 L30.64 56.01 L30.01 55.87 L29.39 55.68 L28.78 55.45 L28.20 55.17 L27.64 54.86 L27.11 54.49 L26.61 54.10 L26.14 53.66 L25.70 53.19 L25.31 52.69 L24.94 52.16 L24.63 51.60 L24.35 51.02 L24.12 50.41 L23.93 49.79 L23.79 49.16 L23.71 48.51 L23.68 47.85 L23.74 47.17 L24.02 46.42 L23.29 46.09 L22.77 45.65 L22.32 45.16 L21.92 44.64 L21.57 44.10 L21.26 43.53 L21.00 42.94 L20.79 42.33 L20.62 41.71 L20.50 41.08 L20.42 40.44 L20.40 39.80 L20.42 39.16 L20.50 38.52 L20.62 37.89 L20.79 37.27 L21.00 36.66 L21.26 36.07 L21.57 35.50 L21.92 34.96 L22.32 34.44 L22.77 33.95 L23.29 33.51 L24.02 33.18 L23.74 32.43 L23.68 31.75 L23.71 31.09 L23.79 30.44 L23.93 29.81 L24.12 29.19 L24.35 28.58 L24.63 28.00 L24.94 27.44 L25.31 26.91 L25.70 26.41 L26.14 25.94 L26.61 25.50 L27.11 25.11 L27.64 24.74 L28.20 24.43 L28.78 24.15 L29.39 23.92 L30.01 23.73 L30.64 23.59 L31.29 23.51 L31.95 23.48 L32.63 23.54 L33.38 23.82 L33.71 23.09 L34.15 22.57 L34.64 22.12 L35.16 21.72 L35.70 21.37 L36.27 21.06 L36.86 20.80 L37.47 20.59 L38.09 20.42 L38.72 20.30 L39.36 20.22 L40.00 20.20 L40.64 20.22 L41.28 20.30 L41.91 20.42 L42.53 20.59 L43.14 20.80 L43.73 21.06 L44.30 21.37 L44.84 21.72 L45.36 22.12 L45.85 22.57 L46.29 23.09 L46.62 23.82 L47.37 23.54 L48.05 23.48 L48.71 23.51 L49.36 23.59 L49.99 23.73 L50.61 23.92 L51.22 24.15 L51.80 24.43 L52.36 24.74 L52.89 25.11 L53.39 25.50 L53.86 25.94 L54.30 26.41 L54.69 26.91 L55.06 27.44 L55.37 28.00 L55.65 28.58 L55.88 29.19 L56.07 29.81 L56.21 30.44 L56.29 31.09 L56.32 31.75 L56.26 32.43 L55.98 33.18 L56.71 33.51 L57.23 33.95 L57.68 34.44 L58.08 34.96 L58.43 35.50 L58.74 36.07 L59.00 36.66 L59.21 37.27 L59.38 37.89 L59.50 38.52 L59.58 39.16 Z"/>
<path d="M32.3 40.5 L38.2 47 L47.3 34.4"/></g></svg>
<div class="t" style="left:408.3px;top:729.2px;font-size:39.5px;line-height:39.5px;font-weight:700;letter-spacing:2.1px;color:#1f2640;">10</div>
<div class="t" style="left:779px;top:729.2px;font-size:39.5px;line-height:39.5px;font-weight:700;letter-spacing:0px;color:#1f2640;">4</div>
<div class="t" style="left:1141.0px;top:729.2px;font-size:39.5px;line-height:39.5px;font-weight:700;letter-spacing:0px;color:#1f2640;">2</div>
<div class="t" style="left:1501px;top:729.2px;font-size:39.5px;line-height:39.5px;font-weight:700;letter-spacing:0px;color:#1f2640;">4</div>
<div class="t" style="left:340.9px;top:782.6px;font-size:31.0px;line-height:31.0px;font-weight:400;letter-spacing:-1.02px;color:#4e5673;">Total Learners</div>
<div class="t" style="left:722px;top:782.6px;font-size:31.0px;line-height:31.0px;font-weight:400;letter-spacing:-1.09px;color:#4e5673;">Yet to Start</div>
<div class="t" style="left:1079px;top:782.6px;font-size:31.0px;line-height:31.0px;font-weight:400;letter-spacing:-1.1px;color:#4e5673;">In Progress</div>
<div class="t" style="left:1438.7px;top:782.6px;font-size:31.0px;line-height:31.0px;font-weight:400;letter-spacing:-0.09px;color:#4e5673;">Completed</div>
<div style="position:absolute;left:1736px;top:433px;width:964px;height:470px;background:#fff;border:2px solid #e2e3e8;border-radius:6px;box-sizing:border-box"></div>
<div style="position:absolute;left:1738px;top:534px;width:960px;height:2px;background:#e2e3e8"></div>
<div style="position:absolute;left:2217px;top:536px;width:2px;height:365px;background:#e2e3e8"></div>
<div class="t" style="left:1788.4px;top:466.2px;font-size:33.5px;line-height:33.5px;font-weight:400;letter-spacing:-0.15px;color:#1f2640;">Average</div>
<div style="position:absolute;left:1923px;top:596px;width:108px;height:108px;background:#fdebf1;border-radius:12px"></div>
<div style="position:absolute;left:2404px;top:596px;width:108px;height:108px;background:#e5e9fc;border-radius:12px"></div>
<svg style="position:absolute;left:1923px;top:596px;" width="108" height="108" viewBox="0 0 108 108" fill="none"><g stroke="#dd4a7e" stroke-width="3.4" stroke-linecap="round" stroke-linejoin="round" fill="none">
<circle cx="54" cy="54" r="33.4"/>
<path d="M35.5 54.5 H32 A22 22 0 0 1 76 54.5 H72.5"/>
<path d="M35.38 43.75 L38.41 45.50"/><path d="M43.25 35.88 L45.00 38.91"/><path d="M54.00 33.00 L54.00 36.50"/><path d="M64.75 35.88 L63.00 38.91"/><path d="M72.62 43.75 L69.59 45.50"/>
<circle cx="54" cy="56" r="3.6"/><path d="M56.8 53 L62.5 47.5"/>
</g></svg>
<svg style="position:absolute;left:2404px;top:596px;" width="108" height="108" viewBox="0 0 108 108" fill="none"><g stroke="#3a52c4" stroke-width="3.4" stroke-linecap="round" stroke-linejoin="round" fill="none">
<circle cx="54" cy="54" r="31"/><path d="M53.4 38.5 V54.5 L65 59.5"/></g></svg>
<div class="t" style="left:1934.3px;top:743.2px;font-size:44.0px;line-height:44.0px;font-weight:700;letter-spacing:-1.6px;color:#1f2640;">56%</div>
<div class="t" style="left:1920.7px;top:803.3px;font-size:29.5px;line-height:29.5px;font-weight:400;letter-spacing:-0.67px;color:#4e5673;">Progress</div>
<div class="t" style="left:2399.5px;top:744.3px;font-size:42.0px;line-height:42.0px;font-weight:700;letter-spacing:-0.1px;color:#1f2640;">19</div>
<div class="t" style="left:2454.5px;top:755.4px;font-size:29.0px;line-height:29.0px;font-weight:400;letter-spacing:-0.17px;color:#1f2640;">days</div>
<div class="t" style="left:2384.8px;top:803.1px;font-size:29.5px;line-height:29.5px;font-weight:400;letter-spacing:-0.44px;color:#4e5673;">Time Spent</div>
<div style="position:absolute;left:251px;top:1071px;width:2449px;height:560px;background:#fff;border:2px solid #e2e3e8;border-bottom:0;border-top-right-radius:6px;box-sizing:border-box"></div>
<div style="position:absolute;left:251px;top:1040px;width:200px;height:40px;background:#fff;border-left:2px solid #e2e3e8;box-sizing:border-box"></div>
<div style="position:absolute;left:251px;top:983px;width:168px;height:67px;background:#fff;border:2px solid #e2e3e8;border-bottom:0;border-radius:18px 18px 0 0;box-sizing:border-box"></div>
<div style="position:absolute;left:417px;top:1001px;width:2277px;height:72px;background:#f0f1f4;border-left:2px solid #e2e3e8;border-bottom:2px solid #e2e3e8;border-bottom-left-radius:23px;box-sizing:border-box"></div>
<div class="t" style="left:288.2px;top:1010.5px;font-size:28.5px;line-height:28.5px;font-weight:400;letter-spacing:0.36px;color:#1f2640;-webkit-text-stroke:0.7px #1f2640">Lesson</div>
<div class="t" style="left:469.4px;top:1010.7px;font-size:28.5px;line-height:28.5px;font-weight:400;letter-spacing:-0.22px;color:#7d8299;-webkit-text-stroke:0.7px #7d8299">Users</div>
<div class="t" style="left:631px;top:1010.7px;font-size:28.5px;line-height:28.5px;font-weight:400;letter-spacing:1.22px;color:#7d8299;-webkit-text-stroke:0.7px #7d8299">Cohorts</div>
<div style="position:absolute;left:293px;top:1111px;width:97px;height:64px;border:2px solid #9298a8;border-radius:7px;box-sizing:border-box"></div>
<svg style="position:absolute;left:293px;top:1111px;" width="97" height="64" viewBox="0 0 97 64" fill="none"><g stroke="#4e5673" stroke-width="2.6" stroke-linecap="round" stroke-linejoin="round" fill="none">
<rect x="14.7" y="19.3" width="32.3" height="25.2" rx="2"/>
<path d="M15 25.5 H46.7 M15 31.8 H46.7 M15 38 H46.7 M31 25.5 V44.3"/>
<path d="M64.5 27.5 L73 36 L81.5 27.5"/></g></svg>
<div style="position:absolute;left:2393px;top:1109px;width:169px;height:68px;border:2px solid #c9ccd5;border-radius:9px;box-sizing:border-box;box-shadow:0 1px 3px rgba(0,0,0,0.04)"></div>
<svg style="position:absolute;left:2393px;top:1109px;" width="169" height="68" viewBox="0 0 169 68" fill="none"><g stroke="#4e5673" stroke-width="2.3" stroke-linecap="round" stroke-linejoin="round" fill="none">
<path d="M27 22 Q27 19.5 40 19.5 Q53 19.5 53 22 Q53 25 50 28 L43 35 V42 Q43 44 41 45 L37 47 V35 L30 28 Q27 25 27 22 Z"/></g>
<path d="M124 29 L133 38.5 L142.5 29" stroke="#80859a" stroke-width="2.4" stroke-linecap="round" stroke-linejoin="round" fill="none"/></svg>
<div class="t" style="left:2471px;top:1127.2px;font-size:30.5px;line-height:30.5px;font-weight:400;letter-spacing:-1.3px;color:#1f2640;">All</div>
<div style="position:absolute;left:2582px;top:1111px;width:76px;height:64px;border:2px solid #8e94a6;border-radius:7px;box-sizing:border-box"></div>
<svg style="position:absolute;left:2582px;top:1111px;" width="76" height="64" viewBox="0 0 76 64" fill="none"><g stroke="#4e5673" stroke-width="2.4" stroke-linecap="round" stroke-linejoin="round" fill="none">
<path d="M38 39.5 V17"/><path d="M30 24.5 L38 16.8 L46 24.5"/>
<path d="M22.5 38.5 V42 Q22.5 46.5 27 46.5 H49 Q53.5 46.5 53.5 42 V38.5"/></g></svg>
<div style="position:absolute;left:253px;top:1213px;width:2444px;height:91px;background:#f6f6f7;border-top:2px solid #e2e3e8;border-bottom:2px solid #e2e3e8;box-sizing:border-box"></div>
<div class="t" style="left:320.4px;top:1241.5px;font-size:30.0px;line-height:30.0px;font-weight:400;letter-spacing:-0.53px;color:#1f2640;">S.No</div>
<div class="t" style="left:482.8px;top:1243.5px;font-size:30.0px;line-height:30.0px;font-weight:400;letter-spacing:-1.12px;color:#1f2640;">Lesson</div>
<div class="t" style="left:1437.5px;top:1243.9px;font-size:30.0px;line-height:30.0px;font-weight:400;letter-spacing:-0.79px;color:#1f2640;">Yet to Start</div>
<div class="t" style="left:1766px;top:1243.9px;font-size:30.0px;line-height:30.0px;font-weight:400;letter-spacing:-0.76px;color:#1f2640;">In Progress</div>
<div class="t" style="left:2103.3px;top:1243.5px;font-size:30.0px;line-height:30.0px;font-weight:400;letter-spacing:0.51px;color:#1f2640;">Completed</div>
<div class="t" style="left:2445.3px;top:1243.5px;font-size:30.0px;line-height:30.0px;font-weight:400;letter-spacing:-0.57px;color:#1f2640;">Time Spent</div>
<svg style="position:absolute;left:589.7px;top:1250px;" width="18" height="24" viewBox="0 0 18 24" fill="none"><path d="M1 10 L8.5 2 L16 10 Z M1 14 L8.5 22 L16 14 Z" fill="#8a90a5"/></svg>
<svg style="position:absolute;left:1592.5px;top:1250px;" width="18" height="24" viewBox="0 0 18 24" fill="none"><path d="M1 10 L8.5 2 L16 10 Z M1 14 L8.5 22 L16 14 Z" fill="#8a90a5"/></svg>
<svg style="position:absolute;left:1926.5px;top:1250px;" width="18" height="24" viewBox="0 0 18 24" fill="none"><path d="M1 10 L8.5 2 L16 10 Z M1 14 L8.5 22 L16 14 Z" fill="#8a90a5"/></svg>
<svg style="position:absolute;left:2267px;top:1250px;" width="18" height="24" viewBox="0 0 18 24" fill="none"><path d="M1 10 L8.5 2 L16 10 Z M1 14 L8.5 22 L16 14 Z" fill="#8a90a5"/></svg>
<svg style="position:absolute;left:2608.3px;top:1250px;" width="18" height="24" viewBox="0 0 18 24" fill="none"><path d="M1 10 L8.5 2 L16 10 Z M1 14 L8.5 22 L16 14 Z" fill="#8a90a5"/></svg>
<div style="position:absolute;left:253px;top:1398px;width:2444px;height:2px;background:#e2e3e8"></div>
<div style="position:absolute;left:253px;top:1494px;width:2444px;height:2px;background:#e2e3e8"></div>
<div class="t" style="left:343.5px;top:1334.5px;font-size:30px;line-height:30px;font-weight:400;letter-spacing:0px;color:#1f2640;">1</div>
<div class="t" style="left:1505.7px;top:1334.5px;font-size:30px;line-height:30px;font-weight:400;letter-spacing:0px;color:#1f2640;">4</div>
<div class="t" style="left:1837.3px;top:1334.5px;font-size:30px;line-height:30px;font-weight:400;letter-spacing:0px;color:#1f2640;">0</div>
<div class="t" style="left:2176.7px;top:1334.5px;font-size:30px;line-height:30px;font-weight:400;letter-spacing:0px;color:#1f2640;">6</div>
<div class="t" style="left:344.0px;top:1430.5px;font-size:30px;line-height:30px;font-weight:400;letter-spacing:0px;color:#1f2640;">2</div>
<div class="t" style="left:1505.7px;top:1430.5px;font-size:30px;line-height:30px;font-weight:400;letter-spacing:0px;color:#1f2640;">4</div>
<div class="t" style="left:1837.3px;top:1430.5px;font-size:30px;line-height:30px;font-weight:400;letter-spacing:0px;color:#1f2640;">0</div>
<div class="t" style="left:2176.7px;top:1430.5px;font-size:30px;line-height:30px;font-weight:400;letter-spacing:0px;color:#1f2640;">6</div>
<div class="t" style="left:344.0px;top:1526.5px;font-size:30px;line-height:30px;font-weight:400;letter-spacing:0px;color:#1f2640;">3</div>
<div class="t" style="left:1505.7px;top:1526.5px;font-size:30px;line-height:30px;font-weight:400;letter-spacing:0px;color:#1f2640;">4</div>
<div class="t" style="left:1837.3px;top:1526.5px;font-size:30px;line-height:30px;font-weight:400;letter-spacing:0px;color:#1f2640;">0</div>
<div class="t" style="left:2176.7px;top:1526.5px;font-size:30px;line-height:30px;font-weight:400;letter-spacing:0px;color:#1f2640;">6</div>
<div class="t" style="left:2470.3px;top:1334.5px;font-size:30.0px;line-height:30.0px;font-weight:400;letter-spacing:-0.46px;color:#1f2640;">1 minute</div>
<div class="t" style="left:2470.3px;top:1430.5px;font-size:30.0px;line-height:30.0px;font-weight:400;letter-spacing:-0.46px;color:#1f2640;">1 minute</div>
<div class="t" style="left:2462px;top:1526.5px;font-size:30.0px;line-height:30.0px;font-weight:400;letter-spacing:-0.06px;color:#1f2640;">4 minutes</div>
<div class="t" style="left:536.6px;top:1336.6px;font-size:30.5px;line-height:30.5px;font-weight:400;letter-spacing:-0.16px;color:#1f2640;">Introduction to email marketing</div>
<div class="t" style="left:536.6px;top:1432.4px;font-size:30.5px;line-height:30.5px;font-weight:400;letter-spacing:-0.57px;color:#1f2640;">Building an email list</div>
<div class="t" style="left:537.6px;top:1527.9px;font-size:30.5px;line-height:30.5px;font-weight:400;letter-spacing:-0.3px;color:#1f2640;">Crafting effective email copy</div>
<svg style="position:absolute;left:484px;top:1336px;" width="38" height="32" viewBox="0 0 38 32" fill="none"><g stroke="#e0a420" stroke-width="2.4" stroke-linecap="round" fill="none">
<path d="M3 3.3 H23.8 M13.4 3.3 V28.5 M19.5 12 H35.5 M27.5 12 V28.5"/></g></svg>
<svg style="position:absolute;left:487px;top:1429px;" width="32" height="38" viewBox="0 0 32 38" fill="none"><g stroke="#a274f0" stroke-width="2.4" stroke-linecap="round" stroke-linejoin="round" fill="none">
<path d="M3.5 5 Q3.5 3 5.5 3 H16 C23 3 28.5 8.5 28.5 15.5 V33.5 Q28.5 35.5 26.5 35.5 H5.5 Q3.5 35.5 3.5 33.5 Z"/>
<path d="M17.5 3.6 V9.5 Q17.5 13 21 13 H27.3"/>
<path d="M9.5 24 H20.5 M9.5 28.8 H16"/></g></svg>
<svg style="position:absolute;left:486px;top:1528px;" width="34" height="34" viewBox="0 0 34 34" fill="none"><g stroke="#3cbf95" stroke-width="2.4" fill="none">
<rect x="3.2" y="3.2" width="11.5" height="11.5" rx="4.2"/><rect x="19" y="3.2" width="11.5" height="11.5" rx="4.2"/>
<rect x="3.2" y="18.7" width="11.5" height="11.5" rx="4.2"/><rect x="19" y="18.7" width="11.5" height="11.5" rx="4.2"/></g></svg>
<svg style="position:absolute;left:80px;top:950px;" width="260" height="160" viewBox="0 0 260 160" fill="none"><defs><filter id="sh" x="-40%" y="-80%" width="180%" height="260%"><feDropShadow dx="0" dy="2" stdDeviation="9.5" flood-color="#000" flood-opacity="0.85"/></filter></defs>
<g filter="url(#sh)"><path d="M51 82.8 L176 81" stroke="#fe0a4d" stroke-width="8" stroke-linecap="round"/>
<path d="M167 56 L205.5 80.2 L168 105.3 L173.6 81 Z" fill="#fe0a4d"/></g></svg>
<div style="position:absolute;left:0px;top:1553px;width:2774px;height:11px;background:linear-gradient(rgba(0,0,0,0),rgba(0,0,0,0.055))"></div>
</body></html>
